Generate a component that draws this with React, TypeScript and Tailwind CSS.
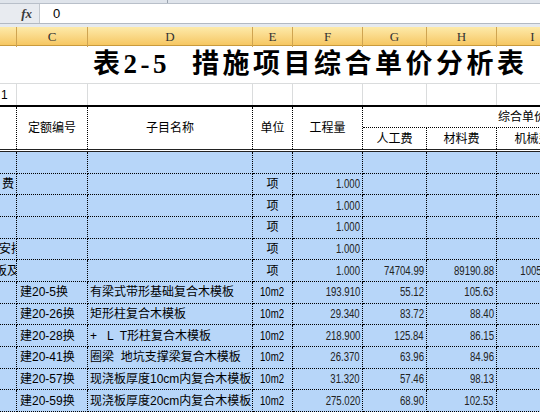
import React from "react";

const COLS = "grid grid-cols-[17px_71px_165px_40px_70px_64px_70px_72px]";
const CJK = "font-['Liberation_Sans','Noto_Sans_CJK_SC',sans-serif]";

type DataRow = {
  a?: string;
  aShift?: string;
  c?: string;
  d?: string;
  e?: string;
  f?: string;
  g?: string;
  h?: string;
  i?: string;
};

const rows: DataRow[] = [
  {},
  { a: "费", e: "项", f: "1.000" },
  { e: "项", f: "1.000" },
  { e: "项", f: "1.000" },
  { a: "安排", aShift: "mr-[-7px]", e: "项", f: "1.000" },
  { a: "模板及", aShift: "mr-[-3px]", e: "项", f: "1.000", g: "74704.99", h: "89190.88", i: "100526.43" },
  { c: "建20-5换", d: "有梁式带形基础复合木模板", e: "10m2", f: "193.910", g: "55.12", h: "105.63" },
  { c: "建20-26换", d: "矩形柱复合木模板", e: "10m2", f: "29.340", g: "83.72", h: "88.40" },
  { c: "建20-28换", d: "+   L  T形柱复合木模板", e: "10m2", f: "218.900", g: "125.84", h: "86.15" },
  { c: "建20-41换", d: "圈梁  地坑支撑梁复合木模板", e: "10m2", f: "26.370", g: "63.96", h: "84.96" },
  { c: "建20-57换", d: "现浇板厚度10cm内复合木模板", e: "10m2", f: "31.320", g: "57.46", h: "98.13" },
  { c: "建20-59换", d: "现浇板厚度20cm内复合木模板", e: "10m2", f: "275.020", g: "68.90", h: "102.53" },
];

const letters = ["", "C", "D", "E", "F", "G", "H", "I"];

function FormulaBar() {
  return (
    <div className="flex flex-col">
      <div className="h-[4px] bg-[#dfe4eb] border-b border-[#b8bfc9] relative">
        <div className="absolute left-[167px] top-0 h-[3px] w-px bg-[#9aa3ae]" />
      </div>
      <div className="flex h-[20px] border-b border-[#b2b9c3]">
        <div className="w-[40px] bg-[#e8ebf0] flex items-center justify-end pr-[7px] border-r border-[#c3c8cf]">
          <span className="font-['Liberation_Serif',serif] italic font-bold text-[13px] text-[#3a3a3a] leading-none">
            fx
          </span>
        </div>
        <div className="flex-1 bg-white flex items-center pl-[13px]">
          <span className={`${CJK} text-[13px] text-black leading-none`}>0</span>
        </div>
      </div>
      <div className="h-[3px] bg-[#e6eaef]" />
    </div>
  );
}

function ColumnHeaders() {
  return (
    <div className={`${COLS} h-[19px] bg-gradient-to-b from-[#fdeaa9] to-[#f6c762] border-b border-[#c99a3c]`}>
      {letters.map((l, i) => (
        <div
          key={i}
          className="flex items-center justify-center border-r border-[#cfa451] font-['Liberation_Serif',serif] text-[13px] text-[#333]"
        >
          {l}
        </div>
      ))}
    </div>
  );
}

function TitleRows() {
  return (
    <>
      <div className="h-[38px] border-b border-[#dadcdd] flex items-center pl-[93px] font-['Liberation_Serif','Noto_Sans_CJK_SC',serif] font-bold text-[27px] text-black leading-none tracking-[3.5px]">
        <span>表2-5</span>
        <span className="ml-[22px]">措施项目综合单价分析表</span>
      </div>
      <div className={`${COLS} h-[21px]`}>
        {letters.map((_, i) => (
          <div
            key={i}
            className={`border-r border-[#dadcdd] flex items-center ${CJK} text-[12px] text-black`}
          >
            {i === 0 ? <span className="pl-[1px]">1</span> : null}
          </div>
        ))}
      </div>
    </>
  );
}

function TableHeader() {
  const cell = `border-r border-dotted border-black flex items-center justify-center ${CJK} text-[12px] text-black`;
  return (
    <div className={`${COLS} grid-rows-[21px_21px] border-t-2 border-black border-b-[3px] border-b-[#222] [border-bottom-style:double] bg-white`}>
      <div className={`${cell} row-span-2`} />
      <div className={`${cell} row-span-2`}>定额编号</div>
      <div className={`${cell} row-span-2`}>子目名称</div>
      <div className={`${cell} row-span-2`}>单位</div>
      <div className={`${cell} row-span-2`}>工程量</div>
      <div className="col-span-3 border-b border-dotted border-black flex items-center pl-[135px] whitespace-nowrap overflow-hidden">
        <span className={`${CJK} text-[12px] text-black`}>综合单价</span>
      </div>
      <div className={cell}>人工费</div>
      <div className={cell}>材料费</div>
      <div className={cell}>机械费</div>
    </div>
  );
}

function Num({ v }: { v?: string }) {
  if (!v) return null;
  return <span className="inline-block origin-right scale-x-[0.8]">{v}</span>;
}

function DataRows() {
  const base = "border-r border-b border-dotted border-black flex items-center overflow-hidden whitespace-pre";
  const txt = `${CJK} text-[12px] text-black`;
  const num = `${CJK} text-[12px] text-[#222] justify-end pr-[2px]`;
  return (
    <div className="bg-[#b7d6f9]">
      {rows.map((r, idx) => (
        <div key={idx} className={`${COLS} h-[21.67px]`}>
          <div className={`${base} justify-end ${txt}`}>
            {r.a ? <span className={r.aShift ?? "pr-[2px]"}>{r.a}</span> : null}
          </div>
          <div className={`${base} ${txt} pl-[3px]`}>{r.c}</div>
          <div className={`${base} ${txt} pl-[2px]`}>{r.d}</div>
          <div className={`${base} ${txt} justify-center`}>
            {r.e === "10m2" ? (
              <span className="inline-block origin-center scale-x-[0.8]">{r.e}</span>
            ) : (
              r.e
            )}
          </div>
          <div className={`${base} ${num}`}>
            <Num v={r.f} />
          </div>
          <div className={`${base} ${num}`}>
            <Num v={r.g} />
          </div>
          <div className={`${base} ${num}`}>
            <Num v={r.h} />
          </div>
          <div className={`${base} ${num}`}>
            <Num v={r.i} />
          </div>
        </div>
      ))}
    </div>
  );
}

export default function App() {
  return (
    <div className="w-[540px] h-[413px] overflow-hidden bg-white">
      <FormulaBar />
      <div className="w-[569px]">
        <ColumnHeaders />
        <TitleRows />
        <TableHeader />
        <DataRows />
      </div>
    </div>
  );
}
